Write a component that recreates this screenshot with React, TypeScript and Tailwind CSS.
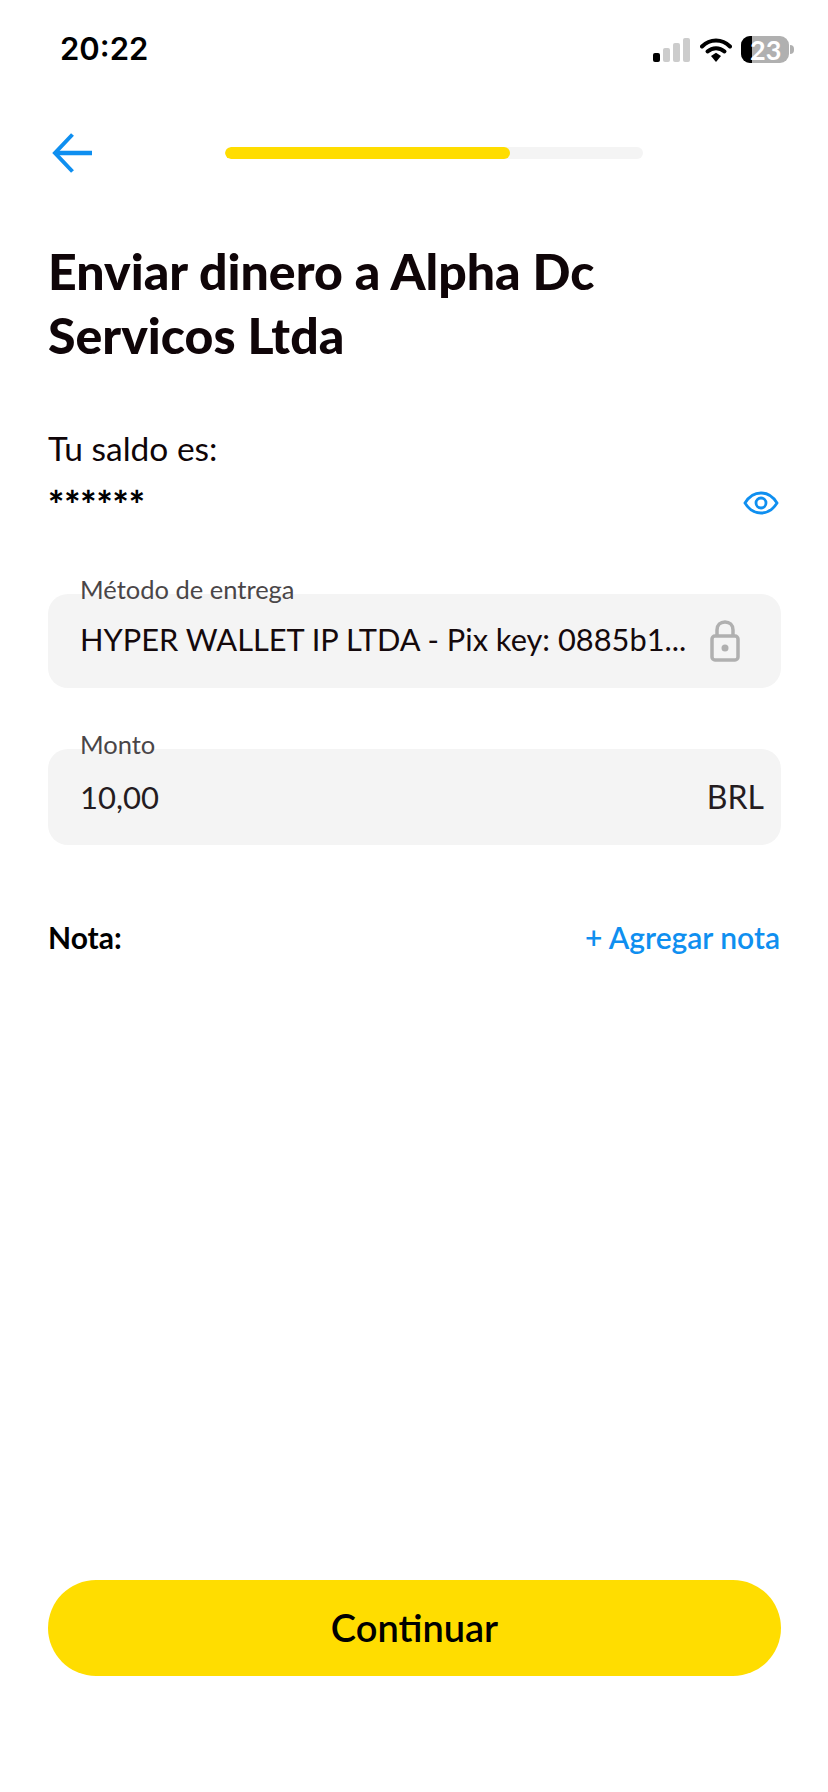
function StatusIcons() {
  return (
    <div className="flex items-center">
      <svg width="38" height="24" viewBox="0 0 38 24" className="block">
        <rect x="0" y="15" width="7" height="9" rx="2" fill="#000" />
        <rect x="10" y="10" width="7" height="14" rx="2" fill="#cccccc" />
        <rect x="20" y="5" width="7" height="19" rx="2" fill="#cccccc" />
        <rect x="30" y="0" width="7" height="24" rx="2" fill="#cccccc" />
      </svg>
      <svg width="32" height="24" viewBox="0 0 32 24" className="ml-[9px] block">
        <path d="M2 8.5C10 0.5 22 0.5 30 8.5" fill="none" stroke="#000" strokeWidth="4" strokeLinecap="round" />
        <path d="M7.5 13.5C12.5 9 19.500 9 24.500 13.500" fill="none" stroke="#000" strokeWidth="4" strokeLinecap="round" />
        <path d="M11 18L16 14.800L21 18L16 24Z" fill="#000" />
      </svg>
      <div className="relative ml-[9px] h-[27px] w-[48px] rounded-[9px] bg-[#b0b0b0]">
        <div className="h-full w-[11px] rounded-l-[9px] bg-black" />
        <span className="absolute left-[9px] top-0 text-[27px] leading-[27px] font-bold text-white">23</span>
      </div>
      <div className="ml-[1px] h-[9px] w-[4px] rounded-r-full bg-[#b0b0b0]" />
    </div>
  );
}

function Field({ label, children }: { label: string; children: React.ReactNode }) {
  return (
    <div className="relative flex items-center rounded-[20px] bg-[#f4f4f4] pl-8">
      <span className="absolute left-8 top-[-19px] text-[25.5px] leading-[28px] text-[#4a4648]">{label}</span>
      {children}
    </div>
  );
}

export default function App() {
  return (
    <div
      className="flex h-[1792px] w-[828px] flex-col bg-white text-black"
      style={{ fontFamily: 'Lato, "Noto Sans", sans-serif' }}
    >
      <div className="flex h-[99px] items-start justify-between pl-[60px] pr-[34px] pt-[30px]">
        <span className="text-[31px] leading-[38px] font-semibold" style={{ fontFamily: 'Inter, sans-serif' }}>
          20:22
        </span>
        <div className="pt-[6px]">
          <StatusIcons />
        </div>
      </div>

      <div className="relative flex h-[108px] items-center justify-center">
        <svg width="40" height="40" viewBox="0 0 40 40" className="absolute left-[52px] top-[34px]">
          <path d="M20.500 1.500L3 20L20.500 38.500" fill="none" stroke="#0f8ff0" strokeWidth="4" />
          <path d="M3 20H40" fill="none" stroke="#0f8ff0" strokeWidth="4.500" />
        </svg>
        <div className="ml-[40px] h-[12px] w-[418px] overflow-hidden rounded-full bg-[#f4f4f4]">
          <div className="h-full w-[285px] rounded-full bg-[#ffdd00]" />
        </div>
      </div>

      <div className="pl-12 pr-[47px]">
        <h1 className="mt-[32px] text-[50px] leading-[64px] font-black text-[#0f0508]">
          Enviar dinero a Alpha Dc
          <br />
          Servicos Ltda
        </h1>

        <div className="mt-[60px] text-[33.500px] leading-[42px] text-[#0f0508]">Tu saldo es:</div>
        <div className="flex items-start justify-between">
          <span className="mt-[15px] text-[38px] leading-[40px] font-black">******</span>
          <svg width="36" height="24" viewBox="0 0 36 24" className="mt-[22px] mr-[2px]">
            <path
              d="M2 12C6 5.500 11.500 2 18 2C24.500 2 30 5.500 34 12C30 18.500 24.500 22 18 22C11.500 22 6 18.500 2 12Z"
              fill="none"
              stroke="#0f8ff0"
              strokeWidth="2.800"
            />
            <circle cx="18" cy="12" r="5" fill="none" stroke="#0f8ff0" strokeWidth="2.800" />
          </svg>
        </div>

        <div className="mt-[70px]">
          <Field label="Método de entrega">
            <div className="flex h-[94px] w-full items-center">
              <span className="mb-[2px] w-[630px] text-[30.800px] leading-[40px] text-[#14090c]">HYPER WALLET IP LTDA - Pix key: 0885b1...</span>
              <svg width="30" height="42" viewBox="0 0 30 42">
                <path d="M7 17V10C7 5 10.500 2 15 2C19.500 2 23 5 23 10V17" fill="none" stroke="#b0b0b0" strokeWidth="3.500" />
                <rect x="2" y="16" width="26" height="24" rx="3" fill="none" stroke="#b0b0b0" strokeWidth="3.500" />
                <circle cx="15" cy="28" r="3.500" fill="#b0b0b0" />
              </svg>
            </div>
          </Field>
        </div>

        <div className="mt-[61px]">
          <Field label="Monto">
            <div className="flex h-[96px] w-full items-center justify-between pr-[17px] leading-[40px] text-[#241c1f]">
              <span className="text-[31px]">10,00</span>
              <span className="text-[32px]">BRL</span>
            </div>
          </Field>
        </div>

        <div className="mt-[74px] flex items-center justify-between pr-[1px] text-[30px] leading-[36px]">
          <span className="font-bold">Nota:</span>
          <span className="font-semibold text-[#0f8ff0]">+ Agregar nota</span>
        </div>
      </div>

      <div className="mt-auto pl-12 pr-[47px] pb-[116px]">
        <button className="h-[96px] w-full rounded-full bg-[#ffdd00] pb-[2px] text-[38px] font-semibold text-black">Continuar</button>
      </div>
    </div>
  );
}
